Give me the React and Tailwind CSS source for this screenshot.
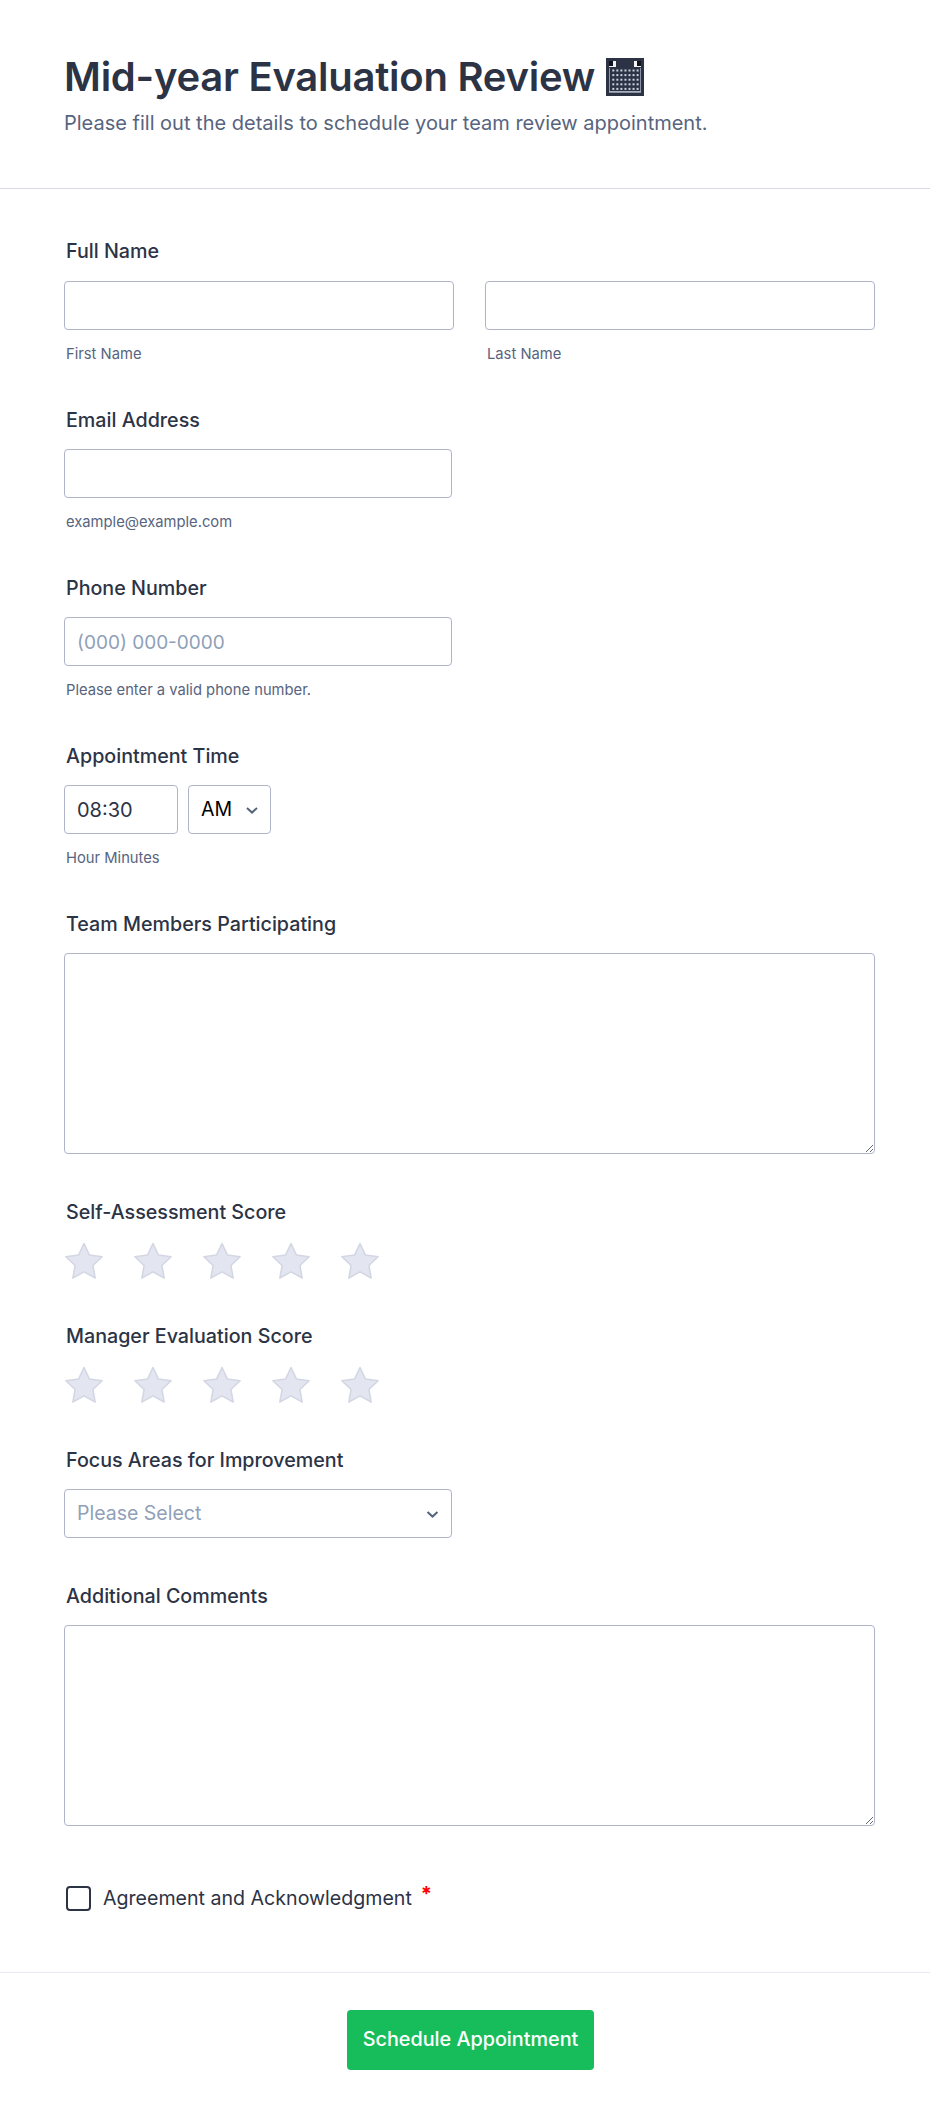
import React from "react";

const labelCls = "block pl-[2px] text-[19.7px] leading-[24px] font-medium text-[#2c3345]";
const inputCls = "block h-[49px] w-full rounded-[4px] border border-[#b0b4c8] bg-white pl-[12px] pr-[13px] pt-[1px] text-[19px] text-[#2c3345] placeholder:text-[#8fa0b8] outline-none";
const subCls = "block pl-[2px] mt-[14px] text-[14.75px] leading-[20px] text-[#57647e]";

function Chevron({ className }) {
  return (
    <svg viewBox="0 0 12 7" className={className} fill="none">
      <path d="M1 1l5 4.6L11 1" stroke="#57647e" strokeWidth="2" />
    </svg>
  );
}

function Star() {
  return (
    <svg viewBox="0 0 40 38" className="h-[37px] w-[40px] shrink-0">
      <path
        d="M20 1.5l5.6 11.9 13 1.7-9.5 9 2.4 12.9L20 30.7 8.5 37l2.4-12.9-9.5-9 13-1.7z"
        fill="#e3e6f0"
        stroke="#d3d7e3"
        strokeWidth="1.6"
        strokeLinejoin="round"
      />
    </svg>
  );
}

function Stars() {
  return (
    <div className="mt-[18px] flex gap-[29px]">
      {[0, 1, 2, 3, 4].map((i) => (
        <Star key={i} />
      ))}
    </div>
  );
}

function Calendar() {
  const dots = [];
  for (let r = 0; r < 5; r++) {
    for (let c = 0; c < 7; c++) {
      dots.push(<rect key={r + "-" + c} x={6.3 + c * 4.05} y={11.5 + r * 4.6} width="2" height="2" fill="#c9d2e0" />);
    }
  }
  return (
    <svg viewBox="0 0 38 38" className="ml-[11px] inline-block h-[38px] w-[38px] shrink-0">
      <rect width="38" height="38" fill="#2c3345" />
      <rect x="3" y="3" width="7" height="6" fill="#f4f4f6" />
      <rect x="3" y="3" width="4" height="5" fill="#10131c" />
      <rect x="28" y="3" width="7" height="6" fill="#f4f4f6" />
      <rect x="31" y="3" width="4" height="5" fill="#10131c" />
      <path d="M3.5 10v24h31V10" fill="none" stroke="#8b93a6" strokeWidth="1" />
      <rect x="3" y="33" width="32" height="1.6" fill="#aab1bf" />
      {dots}
    </svg>
  );
}

function TextArea() {
  return <textarea className="mt-[17px] block h-[201px] w-[811px] rounded-[4px] border border-[#b0b4c8] bg-white outline-none" />;
}

export default function App() {
  return (
    <div className="min-h-[2118px] w-[930px] bg-white" style={{ fontFamily: "Inter, 'Noto Sans', sans-serif" }}>
      <header className="h-[189px] border-b border-[#d8dae9] pl-[64px] pt-[51px]">
        <h1 className="flex h-[52px] items-center text-[40px] leading-[52px] font-semibold tracking-[-0.25px] text-[#2c3345]">
          Mid-year Evaluation Review
          <Calendar />
        </h1>
        <p className="mt-[7px] text-[20px] leading-[26px] text-[#57647e]">
          Please fill out the details to schedule your team review appointment.
        </p>
      </header>

      <main className="pl-[64px] pr-[55px]">
        <section className="pt-[50px]">
          <label className={labelCls}>Full Name</label>
          <div className="mt-[18px] flex gap-[31px]">
            <div className="w-[390px]">
              <input className={inputCls} />
              <span className={subCls}>First Name</span>
            </div>
            <div className="w-[390px]">
              <input className={inputCls} />
              <span className={subCls}>Last Name</span>
            </div>
          </div>
        </section>

        <section className="pt-[44px]">
          <label className={labelCls}>Email Address</label>
          <input className={inputCls + " mt-[17px] !w-[388px]"} />
          <span className={subCls}>example@example.com</span>
        </section>

        <section className="pt-[44px]">
          <label className={labelCls}>Phone Number</label>
          <input className={inputCls + " mt-[17px] !w-[388px]"} placeholder="(000) 000-0000" />
          <span className={subCls}>Please enter a valid phone number.</span>
        </section>

        <section className="pt-[44px]">
          <label className={labelCls}>Appointment Time</label>
          <div className="mt-[17px] flex gap-[10px]">
            <input className={inputCls + " !w-[114px] !text-[20px]"} defaultValue="08:30" />
            <div className="flex h-[49px] w-[83px] items-center justify-between rounded-[4px] border border-[#b0b4c8] pl-[12px] pr-[12px] pt-[1px] text-[19.5px] text-black">
              AM
              <Chevron className="h-[7px] w-[12px]" />
            </div>
          </div>
          <span className={subCls}>Hour Minutes</span>
        </section>

        <section className="pt-[44px]">
          <label className={labelCls}>Team Members Participating</label>
          <TextArea />
        </section>

        <section className="pt-[46px]">
          <label className={labelCls}>Self-Assessment Score</label>
          <Stars />
        </section>

        <section className="pt-[45px]">
          <label className={labelCls}>Manager Evaluation Score</label>
          <Stars />
        </section>

        <section className="pt-[45px]">
          <label className={labelCls}>Focus Areas for Improvement</label>
          <div className="mt-[17px] flex h-[49px] w-[388px] items-center justify-between rounded-[4px] border border-[#b0b4c8] pl-[12px] pr-[12px] pt-[1px] text-[19.5px] text-[#8fa0b8]">
            Please Select
            <Chevron className="h-[7px] w-[13px]" />
          </div>
        </section>

        <section className="pt-[46px]">
          <label className={labelCls}>Additional Comments</label>
          <TextArea />
        </section>

        <section className="flex items-center pl-[2px] pt-[60px]">
          <span className="h-[25px] w-[25px] rounded-[4px] border-2 border-[#2c3345]" />
          <span className="ml-[12px] text-[19.6px] leading-[25px] text-[#2c3345]">Agreement and Acknowledgment</span>
          <span className="relative -top-[4px] ml-[9px] text-[20px] leading-[25px] font-bold text-[#f00]">*</span>
        </section>
      </main>

      <footer className="mt-[61px] flex h-[145px] justify-center border-t border-[#e8e9f2] pl-[11px] pt-[37px]">
        <button className="h-[60px] w-[247px] rounded-[4px] bg-[#18bd5b] text-[19.8px] font-medium text-white">
          Schedule Appointment
        </button>
      </footer>
    </div>
  );
}
